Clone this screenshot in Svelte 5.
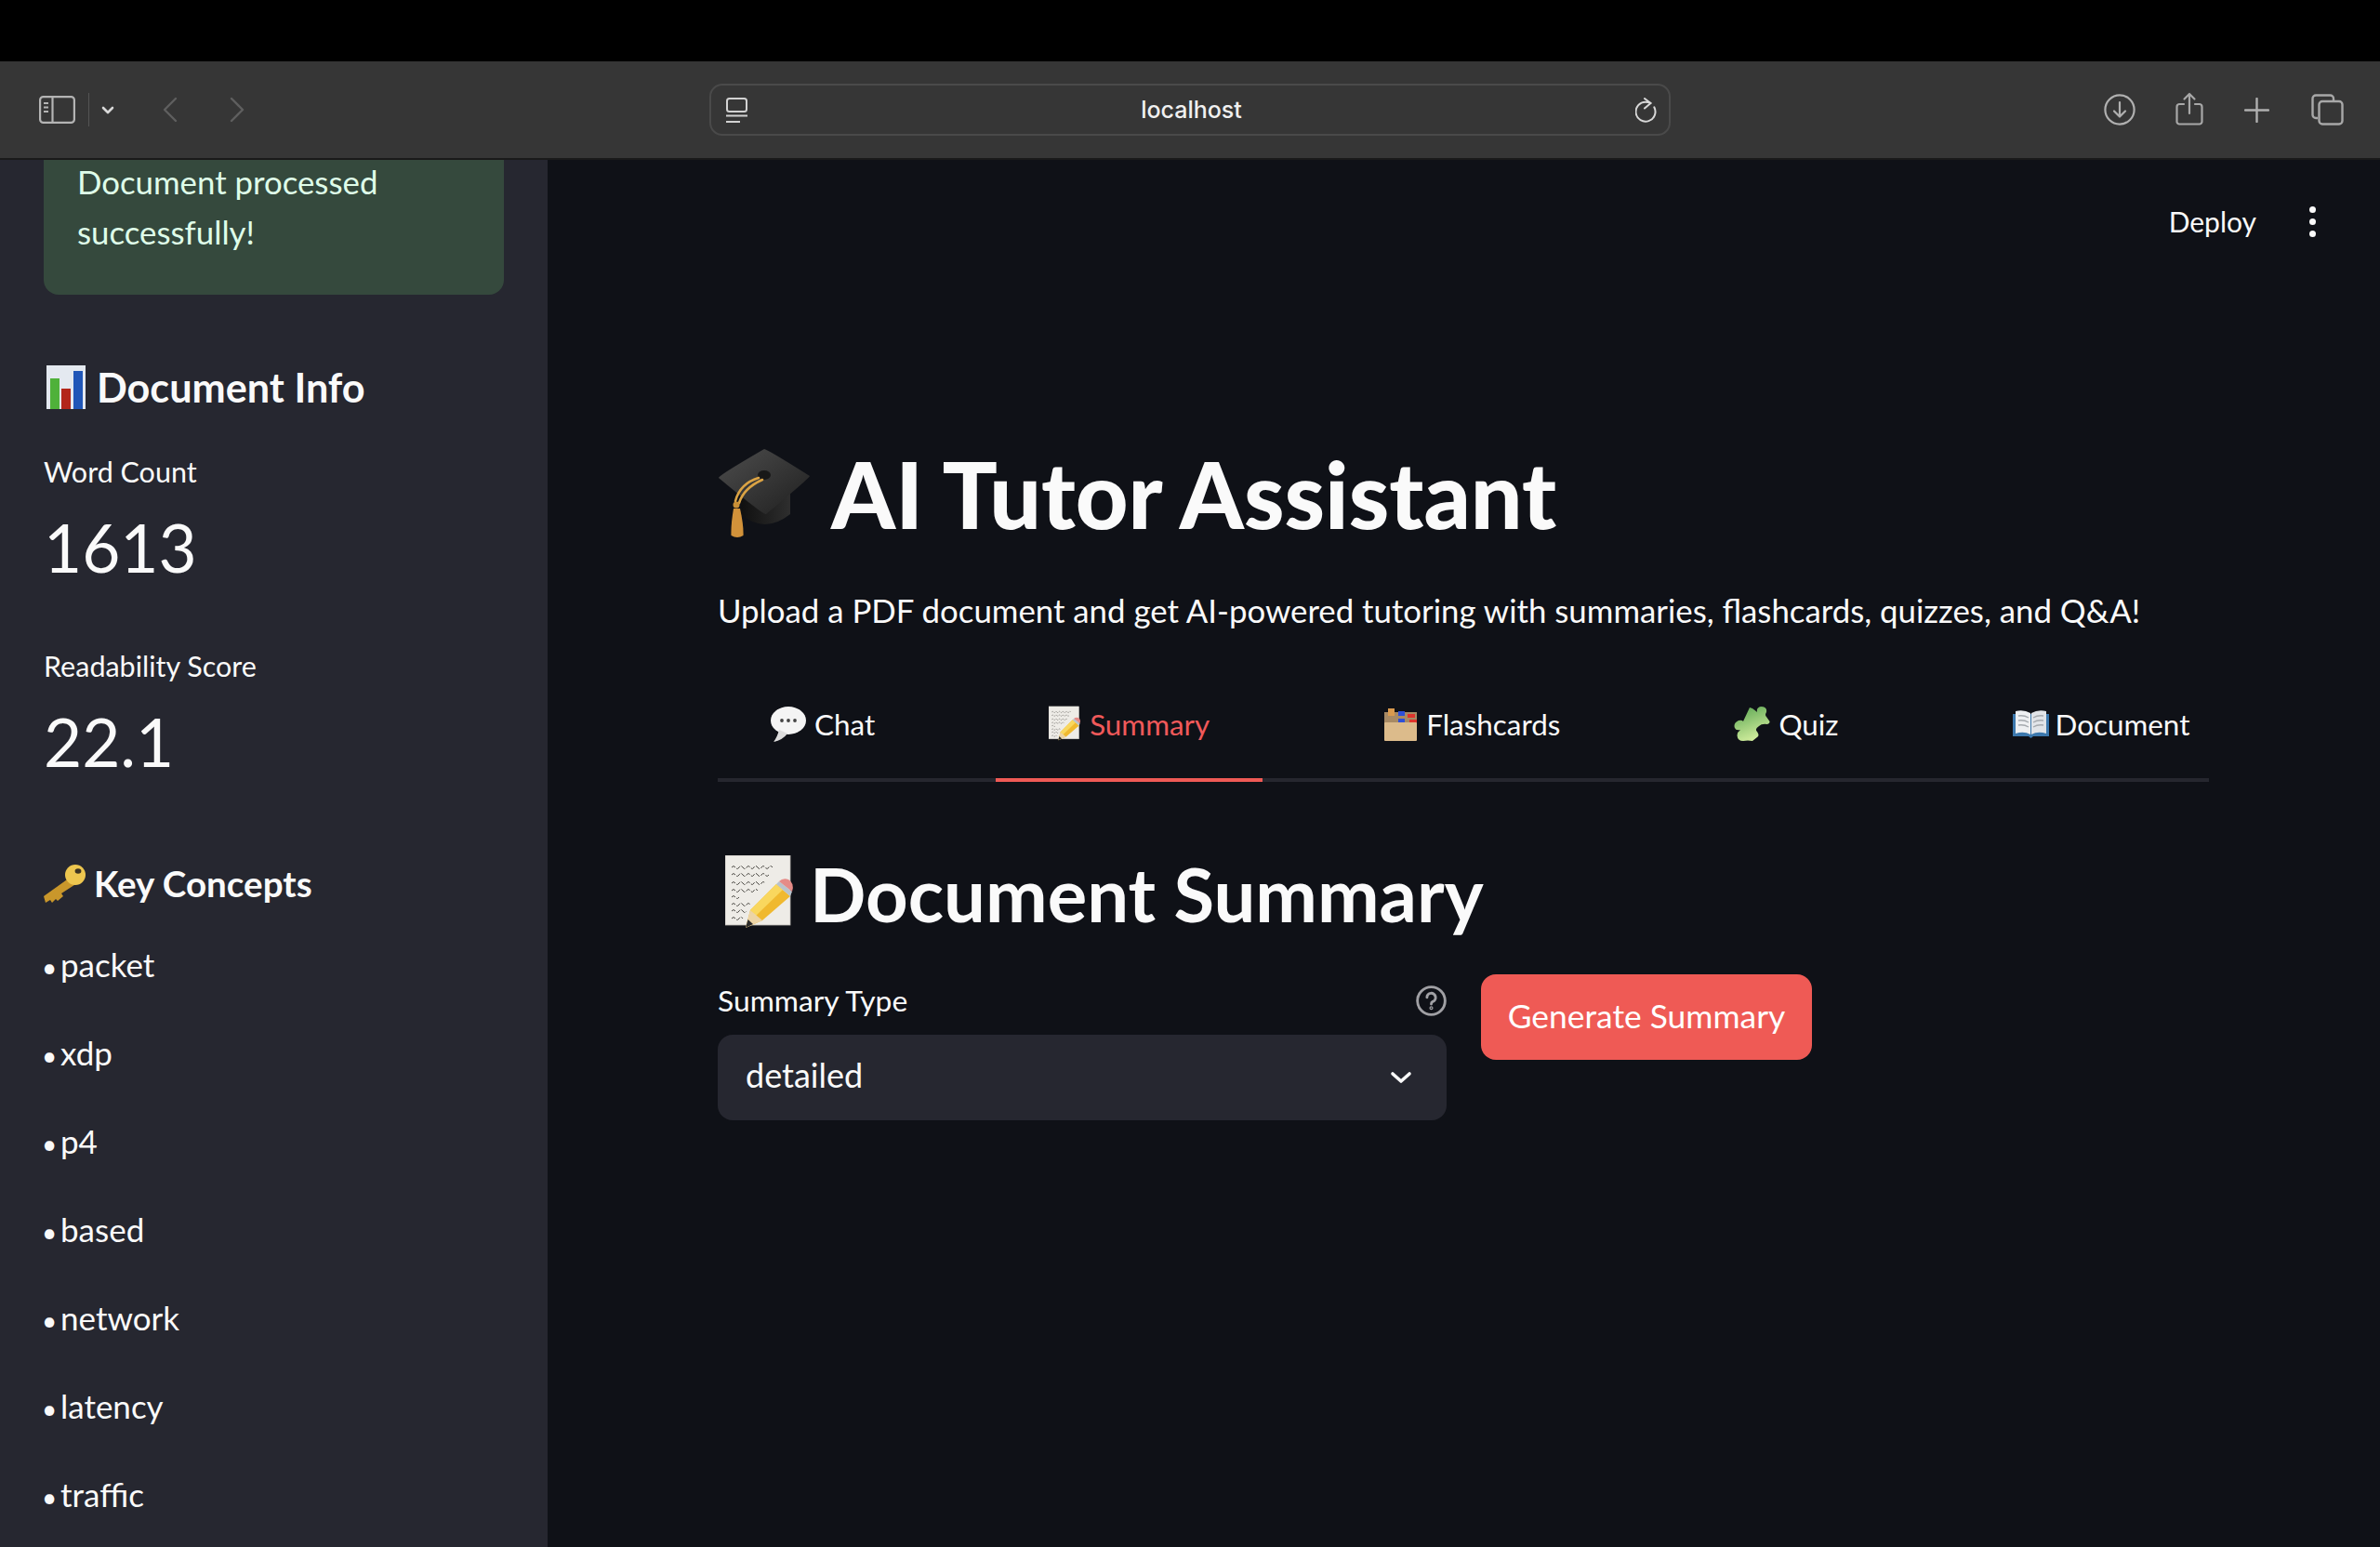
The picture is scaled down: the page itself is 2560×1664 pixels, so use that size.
<script>
  const concepts = ['packet', 'xdp', 'p4', 'based', 'network', 'latency', 'traffic'];
  const tabs = [
    { label: 'Chat', icon: 'bubble' },
    { label: 'Summary', icon: 'memo' },
    { label: 'Flashcards', icon: 'box' },
    { label: 'Quiz', icon: 'puzzle' },
    { label: 'Document', icon: 'book' }
  ];
  let activeTab = $state('Summary');
</script>

{#snippet emoji(name)}
  {#if name === 'cap'}
    <svg viewBox="0 0 100 96">
      <defs>
        <linearGradient id="capTop" x1="0" y1="0" x2="1" y2="1"><stop offset="0" stop-color="#4d4d4d" /><stop offset="1" stop-color="#1f1f1f" /></linearGradient>
        <linearGradient id="capBase" x1="0" y1="0" x2="1" y2="0"><stop offset="0" stop-color="#101010" /><stop offset="1" stop-color="#2e2e2e" /></linearGradient>
      </defs>
      <path d="M25 50 L78 46 L78 70 Q50 92 25 70 Z" fill="url(#capBase)" />
      <path d="M50 0 Q53 0 99 29 Q99 31 52 70 Q49 71 1 31 Q0 29 50 0 Z" fill="url(#capTop)" />
      <ellipse cx="50" cy="28" rx="7" ry="5" fill="#181818" />
      <path d="M44 31 Q24 37 19 56 M48 33 Q28 42 23 58" fill="none" stroke="#dba344" stroke-width="2.6" stroke-linecap="round" />
      <circle cx="20" cy="60" r="3.5" fill="#c98f36" />
      <path d="M17 64 L24 64 Q28 82 27.5 93 Q21 97 14.5 93 Q14 82 17 64 Z" fill="#d2923a" />
    </svg>
  {:else if name === 'chart'}
    <svg viewBox="0 0 42 47">
      <rect width="42" height="47" fill="#e4e9f0" />
      <rect x="4" y="14" width="10" height="33" fill="#4fb13a" />
      <rect x="16" y="25" width="10" height="22" fill="#b3261a" />
      <rect x="29" y="6" width="10" height="41" fill="#2056b8" />
    </svg>
  {:else if name === 'key'}
    <svg viewBox="0 0 45 41">
      <path d="M28 14 L0 34 L2 41 L7 38 L9 41 L13 37 L15 39 L21 34 L19 31 L36 20 Z" fill="#c9972b" />
      <ellipse cx="34" cy="11" rx="11" ry="11" fill="#edc64f" />
      <ellipse cx="37" cy="7" rx="3.4" ry="2.8" fill="#3d3423" />
    </svg>
  {:else if name === 'bubble'}
    <svg viewBox="0 0 38 38">
      <ellipse cx="19" cy="15" rx="19" ry="15" fill="#f4f4f4" />
      <path d="M9 25 Q7 33 3 38 Q13 36 18 29 Z" fill="#dcdcdc" />
      <circle cx="12" cy="15" r="1.9" fill="#444" /><circle cx="19" cy="15" r="1.9" fill="#444" /><circle cx="26" cy="15" r="1.9" fill="#444" />
    </svg>
  {:else if name === 'memo'}
    <svg viewBox="0 0 75 82">
      <rect x="0" y="0" width="70" height="75" fill="#eeece7" stroke="#bdbbb6" stroke-width="0.8" />
      <path d="M7 13 q2 -3 4 0 t4 0 t4 0 t4 0 t4 0 t4 0 t4 0 t4 0 t4 0 t4 0 t4 0 M7 21 q2 -3 4 0 t4 0 t4 0 t4 0 t4 0 t4 0 t4 0 t4 0 t4 0 t4 0 M7 30 q2 -3 4 0 t4 0 t4 0 t4 0 t4 0 t4 0 t4 0 t4 0 t4 0 M7 38 q2 -3 4 0 t4 0 t4 0 t4 0 t4 0 t4 0 t4 0 M7 45 q2 -3 4 0 t4 0 M7 53 q2 -3 4 0 t4 0 t4 0 t4 0 t4 0 M7 60 q2 -3 4 0 t4 0 t4 0 t4 0 M7 68 q2 -3 4 0 t4 0 t4 0" stroke="#4c4a45" stroke-width="1" stroke-dasharray="5 1.5" fill="none" />
      <path d="M55 31 L70 44 L40 70 L22 78 L27 59 Z" fill="#f0b92f" />
      <path d="M55 31 L62 37 L33 65 L27 59 Z" fill="#f9d75e" />
      <path d="M27 59 L40 70 L22 78 Z" fill="#ecd4a6" />
      <path d="M22 78 L24.5 69 L30 74 Z" fill="#2c2c2c" />
      <path d="M58 28 L72 39 L70 44 L55 31 Z" fill="#b9c3cc" />
      <path d="M58 28 Q62 24 68 26 Q75 30 72 39 Z" fill="#e58b87" />
    </svg>
  {:else if name === 'box'}
    <svg viewBox="0 0 37 35">
      <rect x="1" y="4" width="35" height="12" fill="#a88a64" />
      <rect x="5" y="0" width="7" height="8" fill="#d99a4e" />
      <rect x="16" y="3" width="7" height="5" fill="#2d4fd8" />
      <rect x="26" y="6" width="8" height="4" fill="#e0342c" />
      <rect x="16" y="11" width="7" height="4" fill="#2d4fd8" />
      <rect x="28" y="12" width="8" height="4" fill="#e0342c" />
      <rect x="1" y="15" width="35" height="20" rx="1" fill="#dcbb8b" />
    </svg>
  {:else if name === 'puzzle'}
    <svg viewBox="0 0 39 39">
      <defs><linearGradient id="pz" x1="0.2" y1="0" x2="0.6" y2="1"><stop offset="0" stop-color="#5fa855" /><stop offset="1" stop-color="#d6f0a0" /></linearGradient></defs>
      <path d="M17 1 Q21 2 25 6 Q24 1 29 0 Q36 0 35 6 Q33 9 35 11 L38.5 16 Q39 18 36 19 Q30 18 27 21 Q22 24 25 27 Q28 31 25 33 L20 37 Q15 36 10 37 Q4 37 3.5 31 Q4 27 7 25 Q2 26 1 23 Q-1 18 5 15 Q9 14 10 16 Z" fill="url(#pz)" />
    </svg>
  {:else if name === 'book'}
    <svg viewBox="0 0 39 30">
      <path d="M0 4 H39 V28 H22 L19.5 30 L17 28 H0 Z" fill="#3c78ad" />
      <path d="M3 1 Q12 -1 19 3 V26 Q12 22 3 25 Z" fill="#eef0f2" />
      <path d="M36 1 Q27 -1 20 3 V26 Q27 22 36 25 Z" fill="#e1e4e8" />
      <path d="M6 6 Q12 5 17 8 M6 11 Q12 10 17 13 M6 16 Q12 15 17 18 M33 6 Q27 5 22 8 M33 11 Q27 10 22 13 M33 16 Q27 15 22 18" stroke="#a5a9ae" stroke-width="1.4" fill="none" />
    </svg>
  {/if}
{/snippet}

<div class="screen">
  <div class="bezel"></div>

  <header class="toolbar">
    <div class="nav">
      <svg class="side-icon" viewBox="0 0 39 30" fill="none" stroke="#b4b4b4" stroke-width="2.2">
        <rect x="1.1" y="1.1" width="36.8" height="27.8" rx="3.5" />
        <path d="M14.5 1 V29" />
        <path d="M5 8 H10 M5 12.5 H10 M5 17 H10" stroke-width="1.8" />
      </svg>
      <span class="divider"></span>
      <svg class="drop-icon" viewBox="0 0 14 9" fill="none" stroke="#d8d8d8" stroke-width="2.6" stroke-linecap="round" stroke-linejoin="round"><path d="M2 2 L7 7 L12 2" /></svg>
      <svg class="back-icon" viewBox="0 0 16 28" fill="none" stroke="#5f5f5f" stroke-width="2.4" stroke-linecap="round" stroke-linejoin="round"><path d="M14 2 L2 14 L14 26" /></svg>
      <svg class="forward-icon" viewBox="0 0 16 28" fill="none" stroke="#5f5f5f" stroke-width="2.4" stroke-linecap="round" stroke-linejoin="round"><path d="M2 2 L14 14 L2 26" /></svg>
    </div>

    <div class="urlbar">
      <svg class="site-icon" viewBox="0 0 23 27" fill="none" stroke="#d2d2d2" stroke-width="2">
        <rect x="1" y="1" width="21" height="14" rx="2.5" />
        <path d="M0 19.5 H23" />
        <path d="M0 26 H15" />
      </svg>
      <span class="host">localhost</span>
      <svg class="reload-icon" viewBox="0 0 23 27" fill="none" stroke="#d8d8d8" stroke-width="2" stroke-linecap="round" stroke-linejoin="round">
        <path d="M16.5 6 Q14 4.7 11 4.7 A10.5 10.5 0 1 0 20.3 10.3" />
        <path d="M10 1 L16.5 6 L10 11.5" />
      </svg>
    </div>

    <div class="actions">
      <svg class="download-icon" viewBox="0 0 34 34" fill="none" stroke="#b0b0b0" stroke-width="2.2" stroke-linecap="round" stroke-linejoin="round">
        <circle cx="17" cy="17" r="15.6" />
        <path d="M17 9 V24 M11 18.5 L17 24.5 L23 18.5" />
      </svg>
      <svg class="share-icon" viewBox="0 0 30 36" fill="none" stroke="#a8a8a8" stroke-width="2.2" stroke-linecap="round" stroke-linejoin="round">
        <path d="M9 13 H4 A3 3 0 0 0 1.5 16 V31 A3 3 0 0 0 4 34.5 H26 A3 3 0 0 0 28.5 31 V16 A3 3 0 0 0 26 13 H21" />
        <path d="M15 23 V2 M9.5 7.5 L15 2 L20.5 7.5" />
      </svg>
      <svg class="plus-icon" viewBox="0 0 27 27" fill="none" stroke="#b0b0b0" stroke-width="2.4" stroke-linecap="round"><path d="M13.5 1 V26 M1 13.5 H26" /></svg>
      <svg class="tabs-icon" viewBox="0 0 35 34" fill="none" stroke="#a8a8a8" stroke-width="2.4">
        <path d="M7 26 H5 A3.5 3.5 0 0 1 1.5 22.5 V5 A3.5 3.5 0 0 1 5 1.5 H20 A3.5 3.5 0 0 1 24 5 V7" />
        <rect x="8.5" y="8" width="25" height="24.5" rx="3.5" />
      </svg>
    </div>
  </header>

  <div class="body">
    <aside class="sidebar">
      <div class="alert">Document processed successfully!</div>

      <h3 class="side-heading info">
        <span class="emoji chart">{@render emoji('chart')}</span>Document Info
      </h3>

      <div class="metric first">
        <div class="metric-label">Word Count</div>
        <div class="metric-value">1613</div>
      </div>
      <div class="metric">
        <div class="metric-label">Readability Score</div>
        <div class="metric-value">22.1</div>
      </div>

      <h3 class="side-heading concepts">
        <span class="emoji key">{@render emoji('key')}</span>Key Concepts
      </h3>
      <div class="concept-list">
        {#each concepts as concept}
          <div class="concept"><span class="dot">•</span>{concept}</div>
        {/each}
      </div>
    </aside>

    <main class="main">
      <div class="main-top">
        <span class="deploy">Deploy</span>
        <span class="kebab"><i></i><i></i><i></i></span>
      </div>

      <div class="content">
        <h1><span class="emoji cap">{@render emoji('cap')}</span>AI Tutor Assistant</h1>
        <p class="lead">Upload a PDF document and get AI-powered tutoring with summaries, flashcards, quizzes, and Q&amp;A!</p>

        <div class="tab-list">
          {#each tabs as tab}
            <button class="tab" class:active={activeTab === tab.label} onclick={() => (activeTab = tab.label)}>
              <span class="emoji tab-emoji {tab.icon}">{@render emoji(tab.icon)}</span>{tab.label}
            </button>
          {/each}
        </div>

        <h2><span class="emoji memo-big">{@render emoji('memo')}</span>Document Summary</h2>

        <div class="form-row">
          <div class="field">
            <div class="field-label">
              <span>Summary Type</span>
              <svg class="help" viewBox="0 0 32 32" fill="none" stroke="#a0a0a4" stroke-width="2.8" stroke-linecap="round">
                <circle cx="16" cy="16" r="14.4" />
                <path d="M11.5 12.5 A4.5 4.5 0 1 1 17.5 16.8 Q16 17.5 16 19.5" />
                <circle cx="16" cy="23.5" r="0.6" />
              </svg>
            </div>
            <div class="select">
              <span>detailed</span>
              <svg class="chevron" viewBox="0 0 24 14" fill="none" stroke="#fafafa" stroke-width="3.6" stroke-linecap="round" stroke-linejoin="round"><path d="M3 3 L12 11 L21 3" /></svg>
            </div>
          </div>
          <button class="generate">Generate Summary</button>
        </div>
      </div>
    </main>
  </div>
</div>

<style>
  :global(body) {
    margin: 0;
    background: #000;
    font-family: Lato, "Noto Sans", sans-serif;
  }
  .screen {
    display: flex;
    flex-direction: column;
    width: 2560px;
    height: 1664px;
    overflow: hidden;
    color: #fafafa;
  }
  .bezel {
    flex: 0 0 66px;
    background: #000;
  }

  /* browser chrome */
  .toolbar {
    flex: 0 0 106px;
    box-sizing: border-box;
    display: flex;
    align-items: center;
    background: #363636;
    border-bottom: 2px solid #1a1a1a;
  }
  .nav {
    display: flex;
    align-items: center;
    width: 763px;
    padding-left: 42px;
    box-sizing: border-box;
  }
  .side-icon { width: 39px; height: 30px; }
  .divider {
    width: 1px;
    height: 36px;
    margin-left: 14px;
    background: #545454;
  }
  .drop-icon { width: 14px; height: 9px; margin-left: 13px; }
  .back-icon { width: 16px; height: 28px; margin-left: 52px; }
  .forward-icon { width: 16px; height: 28px; margin-left: 56px; }
  .urlbar {
    width: 1034px;
    height: 56px;
    box-sizing: border-box;
    display: flex;
    align-items: center;
    justify-content: space-between;
    padding: 0 13px 0 16px;
    border: 2px solid #4a4a4a;
    border-radius: 14px;
  }
  .site-icon { width: 23px; height: 27px; }
  .reload-icon { width: 23px; height: 27px; }
  .host {
    font-family: Inter, "Liberation Sans", sans-serif;
    font-size: 25px;
    font-weight: 500;
    color: #f0f0f0;
  }
  .actions {
    display: flex;
    align-items: center;
    padding-left: 466px;
  }
  .download-icon { width: 34px; height: 34px; }
  .share-icon { width: 30px; height: 36px; margin-left: 43px; margin-top: -2px; }
  .plus-icon { width: 27px; height: 27px; margin-left: 44px; }
  .tabs-icon { width: 35px; height: 34px; margin-left: 45px; }

  .body {
    flex: 1;
    display: flex;
    min-height: 0;
  }

  /* sidebar */
  .sidebar {
    flex: 0 0 589px;
    box-sizing: border-box;
    padding: 0 47px;
    background: #262730;
    overflow: hidden;
  }
  .alert {
    width: 495px;
    box-sizing: border-box;
    margin-top: -20px;
    padding: 17px 36px 40px;
    background: #35493d;
    border-radius: 16px;
    color: #dffde9;
    font-size: 34.8px;
    line-height: 54px;
  }
  .side-heading {
    display: flex;
    align-items: center;
    margin: 0;
    font-weight: 700;
    color: #fafafa;
  }
  .info {
    margin-top: 71px;
    height: 56px;
    font-size: 43.2px;
  }
  .chart { width: 42px; height: 47px; margin: 0 12px 0 3px; }
  .metric { margin-top: 67px; }
  .metric.first { margin-top: 43px; }
  .metric-label {
    height: 40px;
    line-height: 40px;
    font-size: 30.5px;
  }
  .metric-value {
    height: 80px;
    margin-top: 22px;
    line-height: 80px;
    font-size: 71px;
  }
  .concepts {
    margin-top: 87px;
    height: 50px;
    font-size: 38.6px;
  }
  .key { width: 45px; height: 41px; margin-right: 9px; }
  .concept-list { margin-top: 35px; }
  .concept {
    height: 95px;
    line-height: 54px;
    font-size: 35px;
  }
  .dot {
    display: inline-block;
    width: 19px;
    margin-left: -2px;
    margin-right: 1px;
    font-size: 28px;
  }

  /* main */
  .main {
    flex: 1;
    min-width: 0;
    background: #0f1117;
  }
  .main-top {
    display: flex;
    align-items: center;
    justify-content: flex-end;
    height: 132px;
    padding-right: 69px;
  }
  .deploy {
    font-size: 30px;
    color: #fafafa;
  }
  .kebab {
    display: flex;
    flex-direction: column;
    gap: 6px;
    margin-left: 57px;
  }
  .kebab i {
    width: 7px;
    height: 7px;
    border-radius: 50%;
    background: #fafafa;
  }
  .content {
    width: 1604px;
    margin-left: 183px;
    padding-top: 169px;
  }
  h1 {
    display: flex;
    align-items: center;
    height: 116px;
    margin: 0;
    font-size: 98.5px;
    font-weight: 900;
    line-height: 116px;
  }
  .cap { width: 100px; height: 96px; margin-right: 22px; }
  .lead {
    height: 54px;
    margin: 41px 0 0;
    font-size: 34.8px;
    line-height: 54px;
  }
  .tab-list {
    display: flex;
    gap: 73px;
    height: 108px;
    margin-top: 45px;
    border-bottom: 4px solid #26272f;
  }
  .tab {
    flex: none;
    display: flex;
    align-items: center;
    height: 112px;
    padding: 0 57px 8px;
    box-sizing: border-box;
    background: none;
    border: 0;
    border-bottom: 4px solid transparent;
    color: #fafafa;
    font: inherit;
    font-size: 31.4px;
    cursor: pointer;
  }
  .tab.active {
    color: #f0595a;
    border-bottom-color: #ef5a55;
  }
  .tab-emoji { margin-right: 9px; }
  .tab-emoji.bubble { width: 38px; height: 38px; }
  .tab-emoji.memo { width: 35px; height: 40px; }
  .tab-emoji.box { width: 37px; height: 35px; }
  .tab-emoji.puzzle { width: 39px; height: 39px; }
  .tab-emoji.book { width: 39px; height: 30px; margin-right: 7px; }
  h2 {
    display: flex;
    align-items: center;
    height: 100px;
    margin: 70px 0 0;
    font-size: 79.6px;
    font-weight: 700;
    line-height: 100px;
  }
  .memo-big { width: 75px; height: 82px; margin: 0 16px 0 8px; }
  .form-row {
    display: flex;
    align-items: flex-start;
    gap: 37px;
    margin-top: 37px;
  }
  .field { width: 784px; }
  .field-label {
    display: flex;
    align-items: center;
    justify-content: space-between;
    height: 65px;
    padding-bottom: 9px;
    box-sizing: border-box;
    font-size: 31.8px;
  }
  .help { width: 33px; height: 33px; }
  .select {
    display: flex;
    align-items: center;
    justify-content: space-between;
    height: 92px;
    box-sizing: border-box;
    padding: 0 37px 6px 30px;
    background: #262730;
    border-radius: 16px;
    font-size: 36px;
  }
  .chevron { width: 24px; height: 14px; margin-top: 6px; }
  .generate {
    width: 356px;
    height: 92px;
    padding: 0 0 3px;
    background: #ef5a55;
    border: 0;
    border-radius: 16px;
    color: #fff;
    font: inherit;
    font-size: 35.4px;
    cursor: pointer;
  }
  .emoji {
    flex: none;
    display: block;
  }
  .emoji :global(svg) {
    display: block;
    width: 100%;
    height: 100%;
  }
</style>
